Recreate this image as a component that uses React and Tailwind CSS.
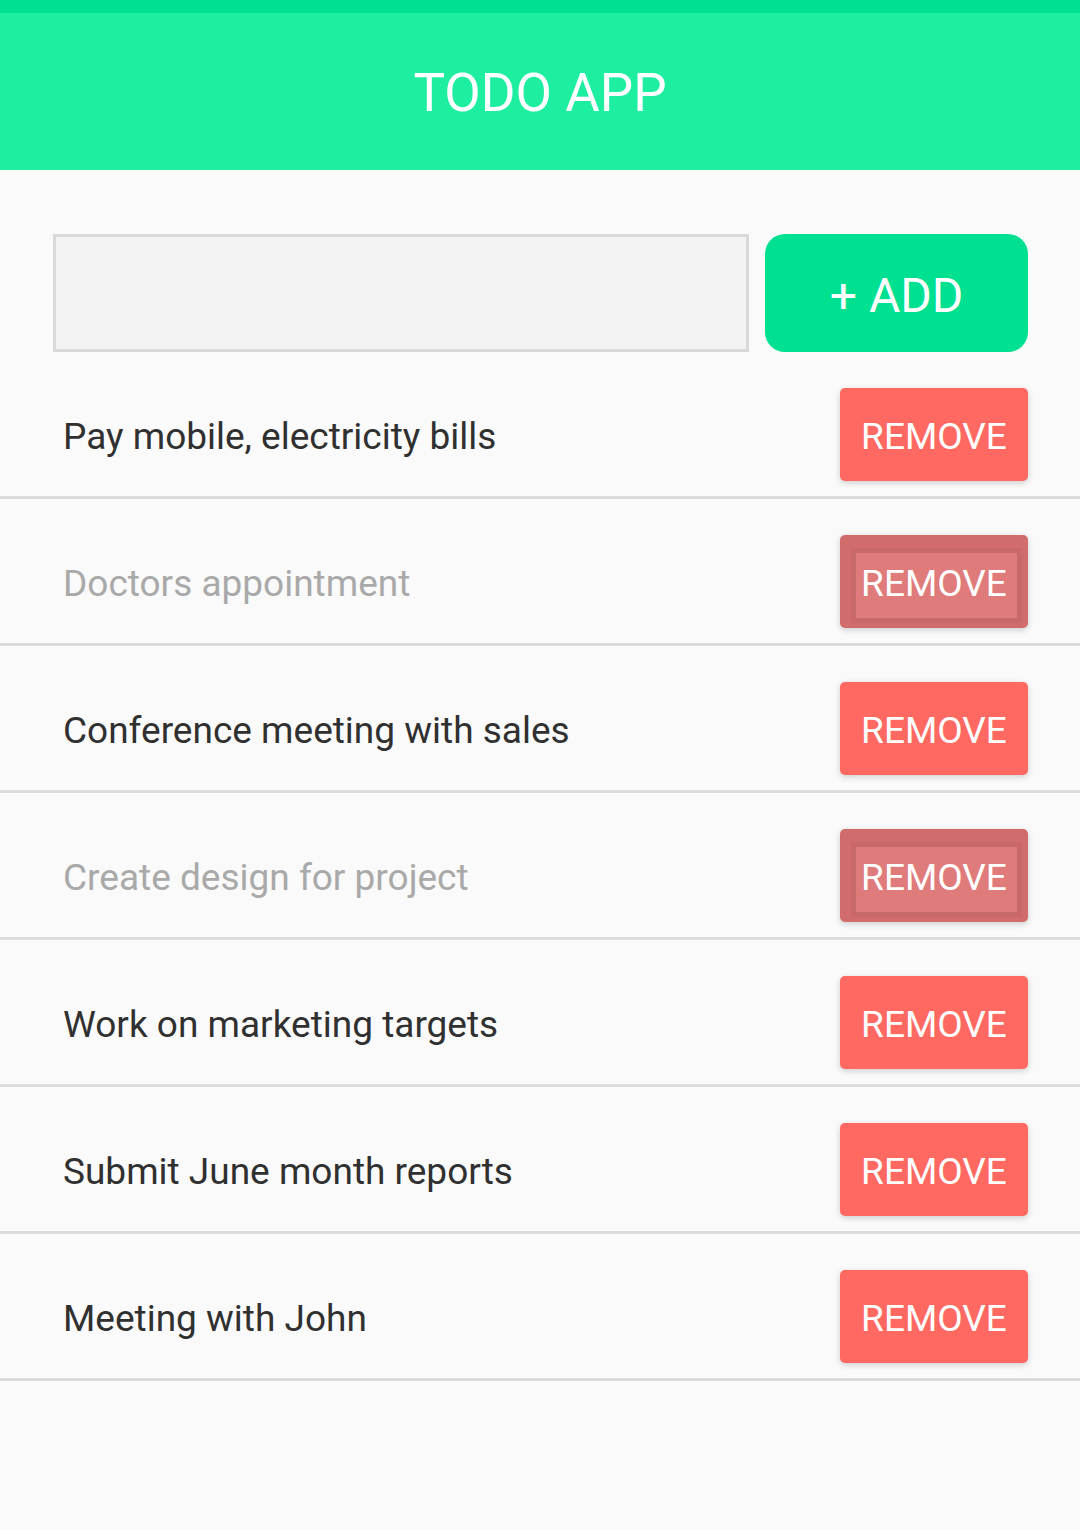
import { useState } from 'react'

const initialTodos = [
  { id: 1, text: 'Pay mobile, electricity bills', done: false },
  { id: 2, text: 'Doctors appointment', done: true },
  { id: 3, text: 'Conference meeting with sales', done: false },
  { id: 4, text: 'Create design for project', done: true },
  { id: 5, text: 'Work on marketing targets', done: false },
  { id: 6, text: 'Submit June month reports', done: false },
  { id: 7, text: 'Meeting with John', done: false },
]

const TodoRow = ({ todo, onRemove }) => {
  return (
    <li className="flex items-center justify-between pl-[63px] pr-[52px] pt-[36px] pb-[15px] border-b-[3px] border-[#dcdcdc]">
      <span className={`text-[37px] leading-none pt-[4px] ${todo.done ? 'text-[#a9a9a9]' : 'text-[#303030]'}`}>{todo.text}</span>
      {todo.done ? (
        <button
          onClick={() => onRemove(todo.id)}
          className="w-[188px] h-[93px] rounded-[5px] bg-[#d06c6c] pl-[16px] pr-[11px] pt-[18px] pb-[10px] shadow-[0_2px_6px_rgba(0,0,0,0.18)]"
        >
          <span className="flex h-full w-full items-center justify-center pr-[5px] pb-[4px] bg-[#e07b7b] shadow-[0_0_0_5px_#c96868] text-white text-[37px] leading-none">
            REMOVE
          </span>
        </button>
      ) : (
        <button
          onClick={() => onRemove(todo.id)}
          className="w-[188px] h-[93px] rounded-[5px] bg-[#ff6961] text-white text-[37px] leading-none pt-[3px] shadow-[0_2px_6px_rgba(0,0,0,0.18)]"
        >
          REMOVE
        </button>
      )}
    </li>
  )
}

const App = () => {
  const [todos, setTodos] = useState(initialTodos)
  const [text, setText] = useState('')

  const addTodo = () => {
    if (text.trim().length > 0) {
      setTodos([...todos, { id: Date.now(), text, done: false }])
      setText('')
    }
  }

  return (
    <div className="min-h-[1530px] bg-[#fafafa] font-['Roboto',sans-serif]">
      <div className="h-[13px] bg-[#00e092]" />
      <header className="h-[157px] bg-[#1eeea0] flex items-center justify-center">
        <h1 className="text-white text-[53px] leading-none font-normal pt-[3px]">TODO APP</h1>
      </header>

      <div className="flex gap-[16px] pl-[53px] pr-[52px] pt-[64px]">
        <input
          value={text}
          onChange={(e) => setText(e.target.value)}
          className="flex-1 h-[118px] border-[3px] border-[#d9d9d9] bg-[#f3f3f3] px-4 text-[36px] focus:outline-none"
          type="text"
        />
        <button
          onClick={addTodo}
          className="w-[263px] h-[118px] rounded-[20px] bg-[#00e091] text-white text-[48px] leading-none pt-[5px]"
        >
          + ADD
        </button>
      </div>

      <ul>
        {todos.map((todo) => (
          <TodoRow key={todo.id} todo={todo} onRemove={(id) => setTodos(todos.filter((t) => t.id !== id))} />
        ))}
      </ul>
    </div>
  )
}

export default App
